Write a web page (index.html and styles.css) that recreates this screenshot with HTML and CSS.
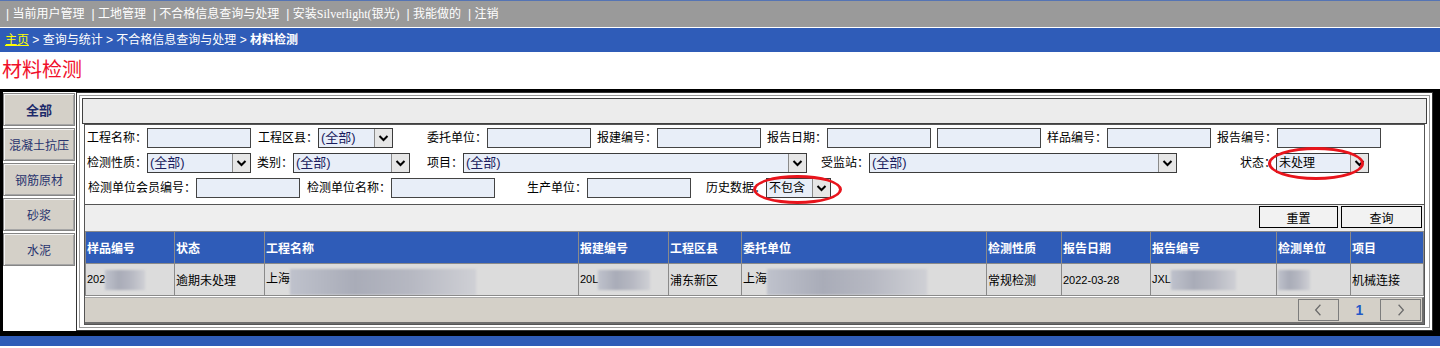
FILE: index.html
```html
<!DOCTYPE html>
<html lang="zh-CN">
<head>
    <meta charset="UTF-8">
    <title>材料检测</title>
    <link rel="stylesheet" href="styles.css">
</head>
<body>
    <!-- 顶部菜单 -->
    <div class="topnav">
        <span>| 当前用户管理</span>
        <span>| 工地管理</span>
        <span>| 不合格信息查询与处理</span>
        <span>| 安装<em>Silverlight(</em>银光<em>)</em></span>
        <span>| 我能做的</span>
        <span>| 注销</span>
    </div>

    <div class="crumb">
        <a class="home">主页</a> &gt; 查询与统计 &gt; 不合格信息查询与处理 &gt; <b>材料检测</b>
    </div>

    <div class="title">材料检测</div>

    <div class="main">
        <!-- 左侧分类 -->
        <div class="tabs">
            <div class="tab active">全部</div>
            <div class="tab">混凝土抗压</div>
            <div class="tab">钢筋原材</div>
            <div class="tab">砂浆</div>
            <div class="tab">水泥</div>
        </div>

        <div class="panel">
            <div class="panel-in">
                <div class="toolbar"></div>

                <div class="box">
                    <div class="form">
                        <div class="frow r1">
                            <label>工程名称：</label><input type="text">
                            <label>工程区县：</label><div class="sel"><span>(全部)</span><i class="arrow"><svg viewBox="0 0 17 18"><path d="M4.5 7l4 4 4-4"/></svg></i></div>
                            <label>委托单位：</label><input type="text">
                            <label>报建编号：</label><input type="text">
                            <label>报告日期：</label><div class="pair"><input type="text"><input type="text"></div>
                            <label>样品编号：</label><input type="text">
                            <label>报告编号：</label><input type="text">
                        </div>
                        <div class="frow r2">
                            <label>检测性质：</label><div class="sel"><span>(全部)</span><i class="arrow"><svg viewBox="0 0 17 18"><path d="M4.5 7l4 4 4-4"/></svg></i></div>
                            <label>类别：</label><div class="sel"><span>(全部)</span><i class="arrow"><svg viewBox="0 0 17 18"><path d="M4.5 7l4 4 4-4"/></svg></i></div>
                            <label>项目：</label><div class="sel"><span>(全部)</span><i class="arrow"><svg viewBox="0 0 17 18"><path d="M4.5 7l4 4 4-4"/></svg></i></div>
                            <label>受监站：</label><div class="sel"><span>(全部)</span><i class="arrow"><svg viewBox="0 0 17 18"><path d="M4.5 7l4 4 4-4"/></svg></i></div>
                            <label>状态：</label><div class="sel plain"><span>未处理</span><i class="arrow"><svg viewBox="0 0 17 18"><path d="M4.5 7l4 4 4-4"/></svg></i><b class="mark m1"></b></div>
                        </div>
                        <div class="frow r3">
                            <label>检测单位会员编号：</label><input type="text">
                            <label>检测单位名称：</label><input type="text">
                            <label>生产单位：</label><input type="text">
                            <label>历史数据：</label><div class="sel plain"><span>不包含</span><i class="arrow"><svg viewBox="0 0 17 18"><path d="M4.5 7l4 4 4-4"/></svg></i><b class="mark m2"></b></div>
                        </div>
                    </div>

                    <div class="btnbar">
                        <button class="btn">重置</button>
                        <button class="btn">查询</button>
                    </div>

                    <table class="grid">
                        <thead>
                            <tr>
                                <th>样品编号</th>
                                <th>状态</th>
                                <th>工程名称</th>
                                <th>报建编号</th>
                                <th>工程区县</th>
                                <th>委托单位</th>
                                <th>检测性质</th>
                                <th>报告日期</th>
                                <th>报告编号</th>
                                <th>检测单位</th>
                                <th>项目</th>
                            </tr>
                        </thead>
                        <tbody>
                            <tr>
                                <td><span class="num">202</span><span class="blur b40"></span></td>
                                <td>逾期未处理</td>
                                <td>上海<span class="blur b186 tall"></span></td>
                                <td><span class="num">20L</span><span class="blur b52"></span></td>
                                <td>浦东新区</td>
                                <td>上海<span class="blur b160 tall"></span></td>
                                <td>常规检测</td>
                                <td><span class="num">2022-03-28</span></td>
                                <td><span class="num">JXL</span><span class="blur b65"></span></td>
                                <td><span class="blur b32"></span></td>
                                <td>机械连接</td>
                            </tr>
                        </tbody>
                    </table>

                    <div class="pager">
                        <span class="pbtn"><svg viewBox="0 0 40 21"><path d="M22 5l-5 5.5 5 5.5"/></svg></span>
                        <span class="pnum">1</span>
                        <span class="pbtn"><svg viewBox="0 0 40 21"><path d="M18 5l5 5.5-5 5.5"/></svg></span>
                    </div>
                </div>
            </div>
        </div>
    </div>

    <div class="footer"></div>
</body>
</html>
```

FILE: styles.css
```css
body {
    margin: 0;
    font-family: "Liberation Sans", "Noto Sans CJK SC", sans-serif;
    font-size: 12px;
    color: #000;
    background: #fff;
}

/* 顶部菜单 */
.topnav {
    display: flex;
    gap: 7px;
    height: 26px;
    line-height: 26px;
    padding-left: 6px;
    background: #9a9a9a;
    color: #fff;
    border-top: 1px solid #5574b4;
    border-bottom: 1px solid #fff;
    white-space: nowrap;
}

.topnav em {
    font-style: normal;
    font-family: "Liberation Serif", serif;
}

.crumb {
    height: 24px;
    line-height: 24px;
    padding-left: 5px;
    background: #2f5cb8;
    color: #fff;
}

.crumb .home {
    color: #ffff00;
    text-decoration: underline;
}

.title {
    height: 37px;
    line-height: 37px;
    padding-left: 2px;
    font-size: 20px;
    color: #f0102a;
}

/* 主体 */
.main {
    display: flex;
    border: 3px solid #000;
    border-right-width: 7px;
    border-bottom-width: 5px;
    background: #fff;
}

.tabs {
    width: 73px;
    flex: none;
    padding-top: 1px;
}

.tab {
    width: 72px;
    height: 33px;
    box-sizing: border-box;
    margin-bottom: 2px;
    display: flex;
    align-items: center;
    justify-content: center;
    background: #d4d0c8;
    border: 1px solid #858585;
    box-shadow: inset 1px 1px 0 #f4f4f4, inset -1px -1px 0 #a6a6a6;
    color: #28336e;
}

.tab.active {
    font-weight: bold;
    font-size: 13px;
    color: #1d2a6a;
}

.panel {
    flex: 1;
    border: 1px solid #333;
    padding: 2px;
}

.panel-in {
    border: 1px solid #9a9a9a;
    padding: 2px;
}

.toolbar {
    height: 24px;
    background: #ececec;
    border: 1px solid #404040;
}

.box {
    margin: 0 2px;
    border: 1px solid #555;
}

/* 查询条件 */
.form {
    height: 76px;
    padding-top: 3px;
    border-bottom: 1px solid #555;
}

.frow {
    display: grid;
    height: 20px;
    margin-bottom: 5px;
}

.r1 { grid-template-columns: 62px 104px 67px 75px 94px 104px 66px 104px 66px 214px 66px 104px 66px 104px; }
.r2 { grid-template-columns: 62px 104px 42px 117px 53px 344px 62px 308px 99px 93px; }
.r3 { grid-template-columns: 111px 104px 91px 104px 92px 104px 75px 65px; margin-top: 1px; }

.frow label {
    text-align: right;
    line-height: 20px;
    white-space: nowrap;
}

.frow input {
    width: 100%;
    height: 20px;
    box-sizing: border-box;
    margin: 0;
    padding: 0 2px;
    border: 1px solid #444;
    background: #e8eef8;
}

.pair {
    display: flex;
    gap: 6px;
}

.sel {
    position: relative;
    display: flex;
    height: 20px;
    box-sizing: border-box;
    border: 1px solid #3c3c3c;
    background: #e8eef8;
    line-height: 18px;
}

.sel span {
    flex: 1;
    padding-left: 2px;
    color: #1a1c5e;
    font-size: 13px;
}

.sel.plain span {
    color: #000;
    font-size: 12px;
}

.sel .arrow {
    width: 17px;
    flex: none;
    background: #e6e6e6;
    border-left: 1px solid #8a8a8a;
}

.sel .arrow svg {
    display: block;
    width: 17px;
    height: 18px;
    fill: none;
    stroke: #000;
    stroke-width: 2;
}

/* 红圈标注 */
.mark {
    position: absolute;
    border: 3px solid #e8141c;
    border-radius: 50%;
    box-sizing: border-box;
}

.m1 {
    left: -9px;
    top: -7px;
    width: 96px;
    height: 33px;
}

.m2 {
    left: -14px;
    top: -4px;
    width: 89px;
    height: 29px;
}

.btnbar {
    height: 26px;
    display: flex;
    justify-content: flex-end;
    align-items: flex-start;
    gap: 3px;
    padding-right: 2px;
    background: #eeeeee;
}

.btn {
    width: 79px;
    height: 22px;
    margin-top: 1px;
    padding: 0;
    border: 1px solid #000;
    background: #f2f2f2;
    font-family: inherit;
    font-size: 12px;
    color: #000;
}

.btn + .btn {
    width: 81px;
}

/* 列表 */
.grid {
    width: 100%;
    border-collapse: collapse;
    table-layout: fixed;
}

.grid th,
.grid td {
    height: 31px;
    padding: 0 1px;
    border: 1px solid #8a8a8a;
    text-align: left;
    white-space: nowrap;
    overflow: hidden;
}

.grid th {
    background: #2f5cb8;
    color: #fff;
    font-weight: bold;
}

.grid td {
    background: #dcdcdc;
}

.grid th:nth-child(1) { width: 86px; }
.grid th:nth-child(2) { width: 87px; }
.grid th:nth-child(3) { width: 311px; }
.grid th:nth-child(4) { width: 87px; }
.grid th:nth-child(5) { width: 70px; }
.grid th:nth-child(6) { width: 242px; }
.grid th:nth-child(7) { width: 72px; }
.grid th:nth-child(8) { width: 86px; }
.grid th:nth-child(9) { width: 123px; }
.grid th:nth-child(10) { width: 71px; }

.num {
    font-size: 11px;
}

.blur {
    display: inline-block;
    height: 20px;
    vertical-align: middle;
    background: linear-gradient(90deg, #bfc2cc, #a9acb8 35%, #b6b8c2 65%, #cfd0d5);
    filter: blur(1px);
}

.blur.tall {
    height: 26px;
    margin-top: 4px;
}

.b32 { width: 32px; }
.b40 { width: 40px; }
.b52 { width: 52px; }
.b65 { width: 65px; }
.b160 { width: 160px; }
.b186 { width: 186px; }

.pager {
    height: 24px;
    margin-top: 1px;
    display: flex;
    justify-content: flex-end;
    align-items: center;
    padding-right: 1px;
    background: #d4d0c8;
    border-top: 1px solid #a8a8a8;
    border-bottom: 2px solid #6e6e6e;
    border-right: 2px solid #6e6e6e;
}

.pbtn {
    width: 39px;
    height: 20px;
    border: 1px solid #7c7c7c;
}

.pbtn svg {
    display: block;
    width: 39px;
    height: 20px;
    fill: none;
    stroke: #6a6a6a;
    stroke-width: 1.3;
}

.pnum {
    width: 41px;
    text-align: center;
    color: #2458c8;
    font-weight: bold;
    font-size: 14px;
}

.footer {
    height: 10px;
    background: #2f5cb8;
}
```
